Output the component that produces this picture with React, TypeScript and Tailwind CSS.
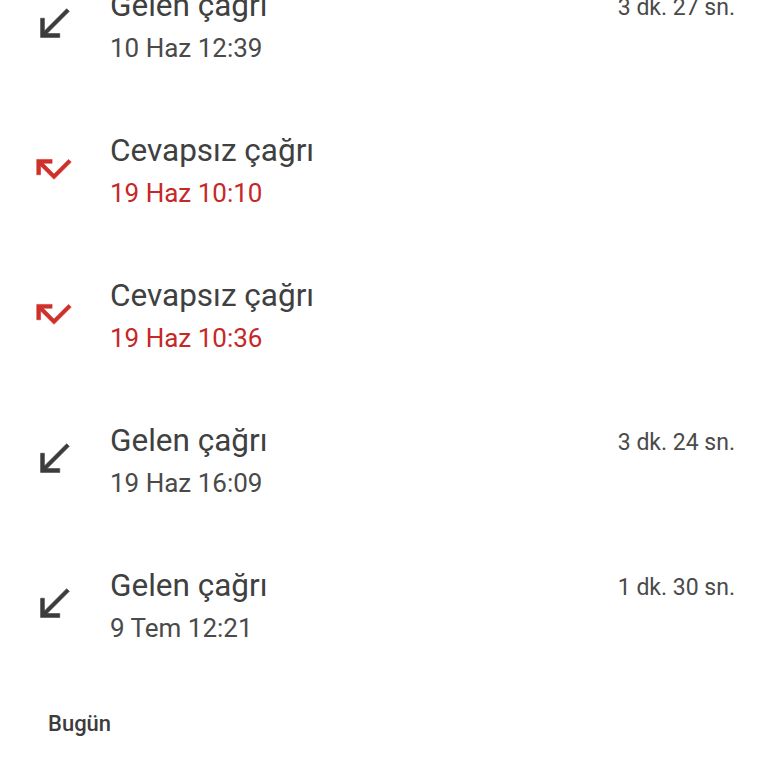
import React from "react";

type Call = { missed: boolean; date: string; duration?: string };

const calls: Call[] = [
  { missed: false, date: "10 Haz 12:39", duration: "3 dk. 27 sn." },
  { missed: true, date: "19 Haz 10:10" },
  { missed: true, date: "19 Haz 10:36" },
  { missed: false, date: "19 Haz 16:09", duration: "3 dk. 24 sn." },
  { missed: false, date: "9 Tem 12:21", duration: "1 dk. 30 sn." },
];

function ReceivedIcon() {
  return (
    <svg width="46" height="46" viewBox="0 0 24 24" fill="#3c3c3c" stroke="#3c3c3c" strokeWidth="0.3">
      <path d="M20 5.41L18.59 4 7 15.59V9H5v10h10v-2H8.41z" />
    </svg>
  );
}

function MissedIcon() {
  return (
    <svg width="46" height="46" viewBox="0 0 24 24" fill="#d0302a" stroke="#d0302a" strokeWidth="0.3">
      <path d="M19.59 7L12 14.59 6.41 9H11V7H3v8h2v-4.59l7 7 9-9z" />
    </svg>
  );
}

export default function App() {
  return (
    <div
      className="w-[768px] h-[768px] overflow-hidden bg-white"
      style={{ fontFamily: "Roboto, 'Noto Sans', sans-serif" }}
    >
      <div className="mt-[-46px] flex flex-col">
        {calls.map((c, i) => (
          <div key={i} className="h-[145px] flex items-center">
            <div className="w-[110px] flex pl-[31px] mt-[-6px]">
              {c.missed ? <MissedIcon /> : <ReceivedIcon />}
            </div>
            <div className="flex-1 flex flex-col pr-[33px]">
              <div className="flex items-center justify-between">
                <span className="text-[31.5px] leading-[42px] text-[#404040]">
                  {c.missed ? "Cevapsız çağrı" : "Gelen çağrı"}
                </span>
                {c.duration && (
                  <span className="text-[23px] mt-[5px] text-[#4a4a4a]">{c.duration}</span>
                )}
              </div>
              <span
                className={`text-[26px] leading-[42px] ${
                  c.missed ? "text-[#c62828]" : "text-[#4a4a4a]"
                }`}
              >
                {c.date}
              </span>
            </div>
          </div>
        ))}
      </div>
      <div className="pl-[48px] mt-[31px] text-[22px] leading-[28px] font-medium text-[#3c3c3c]">
        Bugün
      </div>
    </div>
  );
}
